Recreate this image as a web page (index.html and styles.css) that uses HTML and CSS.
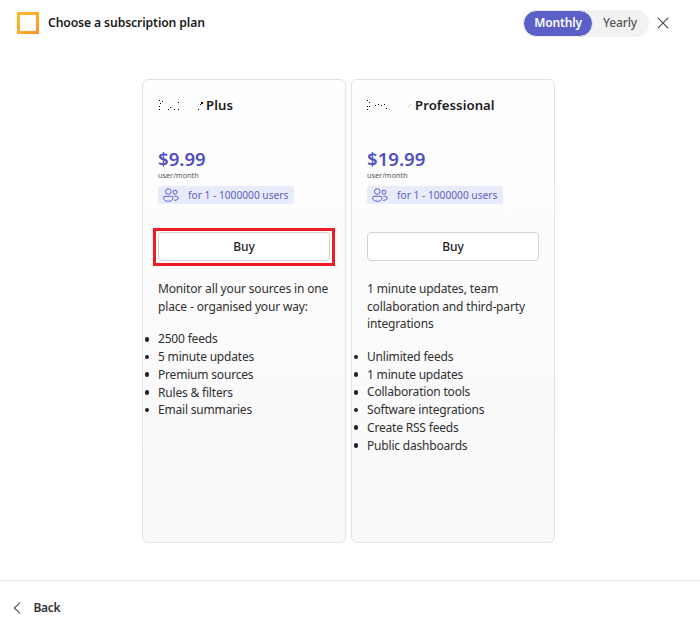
FILE: index.html
```
<!DOCTYPE html>
<html lang="en">
<head>
<meta charset="utf-8">
<title>Choose a subscription plan</title>
<link rel="stylesheet" href="styles.css">
</head>
<body>
<svg width="0" height="0" class="defs"><defs>
<symbol id="people" viewBox="0 0 16 14"><g fill="none" stroke="#5b5fc7" stroke-width="1"><circle cx="5.300" cy="3.500" r="2.800"/><circle cx="12" cy="4.200" r="2"/><path d="M2 8.300h6.700q1.300 0 1.300 1.300c0 2.500-1.900 3.700-4.700 3.700S.6 12.100.6 9.600Q.6 8.300 2 8.300Z"/><path d="M11.400 8.300h2.100q1.600 0 1.600 1.500c0 1.900-1.700 2.800-4.200 2.400"/></g></symbol>
</defs></svg>
<div class="page">
<header class="header">
  <span class="logo"></span>
  <h1 class="title">Choose a subscription plan</h1>
  <div class="toggle"><button class="option active">Monthly</button><button class="option">Yearly</button></div>
  <svg class="close" width="12" height="12" viewBox="0 0 12 12"><path d="M.7.700 11.300 11.300M11.300.700.700 11.300" stroke="#484848" stroke-width="1.100"/></svg>
</header>
<main class="plans">
  <section class="card">
    <h2 class="name"><svg class="marks" width="48" height="14" viewBox="0 0 48 14"><path d="M1 2h1v1H1zM4 3h1v1H4zM2 5h1v1H2zM1 8h1v1H1zM1 11h1v1H1zM10 11h1v1h-1zM12 9h1v1h-1zM16 11h1v1h-1zM20 4h1v1h-1zM20 11h1v1h-1zM43 4h2v2h-2zM42 6h1v1h-1zM40 11h1v1h-1z"/></svg><span>Plus</span></h2>
    <div class="price">$9.99</div>
    <div class="unit">user/month</div>
    <div class="badge"><svg width="16" height="14"><use href="#people"/></svg><span>for 1 - 1000000 users</span></div>
    <div class="buywrap selected"><button class="buy">Buy</button></div>
    <p class="desc">Monitor all your sources in one<br>place - organised your way:</p>
    <ul class="features"><li>2500 feeds</li><li>5 minute updates</li><li>Premium sources</li><li>Rules &amp; filters</li><li>Email summaries</li></ul>
  </section>
  <section class="card">
    <h2 class="name"><svg class="marks" width="48" height="14" viewBox="0 0 48 14"><path d="M0 2h1v1H0zM2 4h1v1H2zM0 8h1v1H0zM2 8h1v1H2zM0 11h1v1H0zM8 7h1v1H8zM11 6h1v1h-1zM14 7h1v1h-1zM17 6h1v1h-1zM19 10h1v1h-1z"/><path class="faint" d="M22 11h1v1h-1zM41 8h1v1h-1zM43 6h1v1h-1z"/></svg><span>Professional</span></h2>
    <div class="price">$19.99</div>
    <div class="unit">user/month</div>
    <div class="badge"><svg width="16" height="14"><use href="#people"/></svg><span>for 1 - 1000000 users</span></div>
    <div class="buywrap"><button class="buy">Buy</button></div>
    <p class="desc">1 minute updates, team<br>collaboration and third-party<br>integrations</p>
    <ul class="features"><li>Unlimited feeds</li><li>1 minute updates</li><li>Collaboration tools</li><li>Software integrations</li><li>Create RSS feeds</li><li>Public dashboards</li></ul>
  </section>
</main>
<footer class="footer"><svg width="8" height="12" viewBox="0 0 8 12"><path d="M7 .7 1.200 6 7 11.300" fill="none" stroke="#505050" stroke-width="1.100"/></svg><span>Back</span></footer>
</div>
</body>
</html>
```
FILE: styles.css
```
*{box-sizing:border-box}
body{margin:0;background:#fff;color:#303030;font-family:"Noto Sans",sans-serif;font-size:12px}
button{font-family:inherit;padding:0;border:0;background:none}
h1,h2,p,ul{margin:0;padding:0}
.defs{display:block}
.page{display:flex;flex-direction:column;height:630px}
.header{display:flex;align-items:center;height:46px;padding:0 31px 0 17px}
.logo{width:22px;height:22px;background:linear-gradient(#fff,#fff) center/16px 16px no-repeat,linear-gradient(135deg,#fcc026,#ff9222)}
.title{margin:-1px 0 0 9px;font-size:12.200px;font-weight:600;letter-spacing:-.12px;color:#1b1b1b;white-space:nowrap}
.toggle{display:flex;height:27px;margin-left:auto;border-radius:14px;background:#f2f2f2}
.option{width:56px;padding:0 2px 1px 0;font-size:12px;font-weight:500;letter-spacing:-.15px;color:#555}
.option.active{width:70px;padding:0 0 1px;border:1px solid #eeeefa;border-radius:14px;background:#5b5fc7;color:#fff;font-weight:600}
.close{margin-left:8px}
.plans{display:flex;gap:5px;margin:33px 0 0 142px}
.card{width:204px;height:464px;border:1px solid #e2e2e2;border-radius:6px;padding:0 15px;background:linear-gradient(#fefefe,#f8f8f8)}
.name{display:flex;align-items:center;height:20px;margin-top:15px;font-size:13.200px;font-weight:600;letter-spacing:.05px;color:#1b1b1b}
.faint{fill:#bbb}
.price{height:24px;margin-top:32px;font-size:18.600px;line-height:24px;font-weight:600;color:#4f52c0}
.unit{height:9px;font-size:7.300px;line-height:9px;color:#555}
.badge{display:flex;align-items:center;width:136px;height:18px;margin-top:6px;padding-left:5px;border-radius:2px;background:#e8ebfa;color:#5b5fc7;font-size:10.200px;white-space:nowrap}
.badge span{margin-left:9px}
.buywrap{width:182px;height:38px;margin:24px 0 0 -5px;padding:4px 5px}
.selected{border:3px solid #ed1c24;padding:1px 2px}
.buy{display:block;width:172px;height:29px;padding-bottom:1px;border:1px solid #d4d4d4;border-radius:4px;background:#fff;font-size:12px;font-weight:500;letter-spacing:-.1px;color:#222}
.desc{margin-top:14px;line-height:17.600px;letter-spacing:-.15px;white-space:nowrap}
.features{margin-top:15.300px;line-height:17.700px;letter-spacing:-.19px;list-style:none}
.features li{display:flex;align-items:center;margin-left:-15px;white-space:nowrap}
.features li::before{content:"";width:4.500px;height:4.500px;margin:0 9px 0 1.500px;border-radius:50%;background:#222}
.footer{display:flex;align-items:center;height:50px;margin-top:auto;padding:4px 0 0 13px;border-top:1px solid #e8e8e8;font-weight:600;letter-spacing:-.3px;color:#333}
.footer span{margin-left:12.500px}
```
